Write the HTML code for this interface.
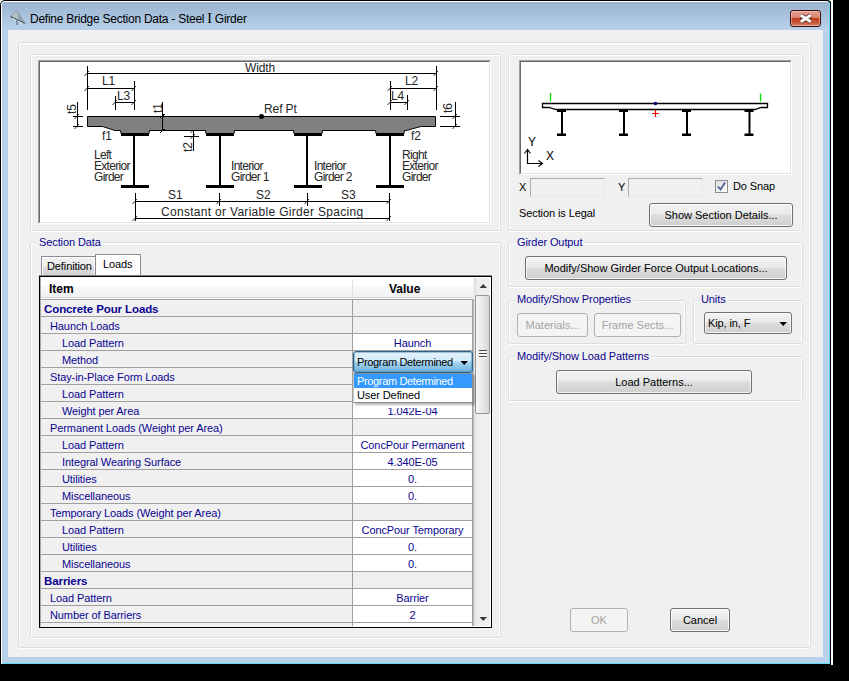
<!DOCTYPE html><html><head><meta charset="utf-8"><style>
*{margin:0;padding:0;box-sizing:border-box}
html,body{width:849px;height:681px;overflow:hidden;background:#000}
body{position:relative;font-family:"Liberation Sans",sans-serif;font-size:11px;color:#000;letter-spacing:-0.1px}
.a{position:absolute}
.t{position:absolute;white-space:nowrap;line-height:13px}
.gb{position:absolute;border:1px solid #D5DFE5;border-radius:2px;box-shadow:0 1px 0 #fff, inset 1px 1px 0 #fff, inset -1px 0 0 #fff}
.gl{position:absolute;white-space:nowrap;line-height:13px;color:#0A0590;background:#F0F0F0;padding:0 2px}
.btn{position:absolute;letter-spacing:0;border:1px solid #707070;border-radius:3px;background:linear-gradient(#F2F2F2 0,#EBEBEB 45%,#DDDDDD 50%,#CFCFCF 100%);box-shadow:inset 0 0 0 1px rgba(255,255,255,.75);text-align:center;white-space:nowrap;color:#000}
.btn.dis{border-color:#ADB2B5;background:#F4F4F4;color:#A3A3A3;box-shadow:none}
.row{position:absolute;left:41px;width:431px;height:16px}
.ic{position:absolute;top:1px;height:16px;line-height:16px;color:#0A0590;white-space:nowrap}
.vc{position:absolute;left:312px;top:0;width:119px;height:16px;line-height:18px;text-align:center;color:#0A0590;white-space:nowrap}
.hl{position:absolute;left:41px;width:431px;height:1px;background:#A0A0A0}
</style></head><body>
<div class="a" style="left:0;top:0;width:5px;height:5px;background:#fff"></div>
<div class="a" style="left:826px;top:0;width:7px;height:5px;background:#E8F0F8"></div>
<div class="a" style="left:0;top:0;width:832px;height:664px;background:#000;border-radius:5px 5px 0 0"></div>
<div class="a" style="left:831px;top:0;width:2px;height:665px;background:#fff"></div>
<div class="a" style="left:1px;top:1px;width:829px;height:663px;background:#fff;border-radius:4px 4px 0 0"></div>
<div class="a" style="left:2px;top:2px;width:828px;height:662px;background:#62D8F2;border-radius:3px 3px 0 0"></div>
<div class="a" style="left:2px;top:2px;width:827px;height:661px;background:linear-gradient(#99B4D1 0px,#B9D1EA 28px,#B9D1EA 100%);border-radius:3px 3px 0 0"></div>
<div class="a" style="left:8px;top:30px;width:815px;height:627px;background:#F0F0F0"></div>
<svg class="a" style="left:9px;top:9px" width="18" height="18" viewBox="0 0 18 18">
<path d="M7.7 1.5 L1.2 7.5 L16.6 14.8 Z" fill="#B8C6CC" stroke="#7E939C" stroke-width="0.9"/>
<path d="M7.7 1.5 L9.5 12 L16.6 14.8 Z" fill="#93A6AE"/>
<path d="M2 7.8 L15.5 14.3" stroke="#3D5661" stroke-width="1.4"/>
<path d="M3 9.2 L14.5 14.8" stroke="#E8EEF0" stroke-width="0.9"/>
<path d="M8 10.5 V16" stroke="#6F868F" stroke-width="1.6"/>
</svg>
<div class="t" style="left:30px;top:12px;font-size:12px;line-height:14px;letter-spacing:-0.25px;word-spacing:0;color:#000">Define Bridge Section Data - Steel <span style="font-family:&quot;Liberation Serif&quot;,serif;font-size:14px;line-height:10px">I</span> Girder</div>
<div class="a" style="left:790px;top:10px;width:31px;height:17px;border:1px solid #3C0E0E;border-radius:3px;background:linear-gradient(#E8A293 0,#D8826E 45%,#C0401E 50%,#C85A3C 80%,#D98C70 100%);box-shadow:inset 0 0 0 1px rgba(255,220,210,.45)"></div>
<svg class="a" style="left:797px;top:11px" width="18" height="15" viewBox="0 0 18 15">
<path d="M3.8 4.3 L13.7 10.7 M13.7 4.3 L3.8 10.7" stroke="#4A2A26" stroke-width="4.4" stroke-linecap="butt"/>
<path d="M3.8 4.3 L13.7 10.7 M13.7 4.3 L3.8 10.7" stroke="#FFFFFF" stroke-width="2.8" stroke-linecap="butt"/>
</svg>
<div class="gb" style="left:18px;top:42px;width:793px;height:606px"></div>
<div class="gb" style="left:30px;top:54px;width:471px;height:177px"></div>
<div class="gb" style="left:508px;top:54px;width:295px;height:177px"></div>
<div class="gb" style="left:30px;top:242px;width:471px;height:396px"></div>
<div class="gb" style="left:508px;top:242px;width:295px;height:45px"></div>
<div class="gb" style="left:508px;top:300px;width:178px;height:44px"></div>
<div class="gb" style="left:693px;top:300px;width:110px;height:44px"></div>
<div class="gb" style="left:508px;top:356px;width:295px;height:45px"></div>
<div class="gl" style="left:37px;top:236px">Section Data</div>
<div class="gl" style="left:515px;top:236px">Girder Output</div>
<div class="gl" style="left:515px;top:293px">Modify/Show Properties</div>
<div class="gl" style="left:699px;top:293px">Units</div>
<div class="gl" style="left:515px;top:350px">Modify/Show Load Patterns</div>
<div class="a" style="left:38px;top:60px;width:453px;height:164px;background:#fff;border-style:solid;border-width:1px;border-color:#A0A0A0 #FFFFFF #FFFFFF #A0A0A0"></div>
<div class="a" style="left:39px;top:61px;width:451px;height:162px;border-style:solid;border-width:1px;border-color:#696969 #E3E3E3 #E3E3E3 #696969"></div>
<div class="a" style="left:519px;top:60px;width:273px;height:115px;background:#fff;border-style:solid;border-width:1px;border-color:#A0A0A0 #FFFFFF #FFFFFF #A0A0A0"></div>
<div class="a" style="left:520px;top:61px;width:271px;height:113px;border-style:solid;border-width:1px;border-color:#696969 #E3E3E3 #E3E3E3 #696969"></div>
<svg class="a" style="left:40px;top:62px" width="449" height="160" viewBox="40 62 449 160" shape-rendering="crispEdges"><g stroke="#000" stroke-width="1" fill="none"><path d="M87 73.5 H436 M87.5 66 V110 M436.5 66 V110"/><path d="M87 88.5 H134 M134.5 81 V110"/><path d="M115 102.5 H134 M115.5 96 V110"/><path d="M390 88.5 H436 M390.5 81 V110"/><path d="M390 102.5 H407 M407.5 95 V110"/><path d="M77.5 102 V127 M73 116.5 H83 M73 126.5 H83"/><path d="M455.5 102 V127 M440 116.5 H460 M440 126.5 H460"/><path d="M193.5 127 V151 M184 136.5 H199"/><path d="M135 201.5 H389 M135 218.5 H389 M135.5 193 V221 M389.5 193 V221 M219.5 193 V206 M307.5 193 V206"/></g><path d="M84.5 76 L89 71 M433.5 76 L438 71 M84.5 91 L89 86 M131.5 91 L136 86 M112.5 105 L117 100 M131.5 105 L136 100 M387.5 91 L392 86 M433.5 91 L438 86 M387.5 105 L392 100 M404.5 105 L409 100 M132.5 204 L137 199 M386.5 204 L391 199 M216.5 204 L221 199 M304.5 204 L309 199 M132.5 221 L137 216 M386.5 221 L391 216 M74.5 119 L79 114 M74.5 129 L79 124 M452.5 119 L457 114 M452.5 129 L457 124 M190.5 133 L195 128 M190.5 139 L195 134" stroke="#000" stroke-width="0.8" fill="none" shape-rendering="auto"/><polygon points="87.5,116.5 435.5,116.5 435.5,126.5 421,126.5 406,130.5 404.5,130.5 404,133.5 376,133.5 375.5,130.5 322.5,130.5 322,133.5 294,133.5 293.5,130.5 234.5,130.5 234,133.5 206,133.5 205.5,130.5 149.5,130.5 149,133.5 121,133.5 120.5,130.5 115,130.5 102.5,126.5 87.5,126.5" fill="#808080" stroke="#000" stroke-width="1" shape-rendering="auto"/><rect x="121" y="134" width="28" height="2" fill="#000"/><rect x="133" y="136" width="2" height="49" fill="#000"/><rect x="121" y="185" width="28" height="3" fill="#000"/><rect x="206" y="134" width="28" height="2" fill="#000"/><rect x="219" y="136" width="2" height="49" fill="#000"/><rect x="206" y="185" width="28" height="3" fill="#000"/><rect x="294" y="134" width="28" height="2" fill="#000"/><rect x="306" y="136" width="2" height="49" fill="#000"/><rect x="294" y="185" width="28" height="3" fill="#000"/><rect x="376" y="134" width="28" height="2" fill="#000"/><rect x="389" y="136" width="2" height="49" fill="#000"/><rect x="376" y="185" width="28" height="3" fill="#000"/><path d="M162.5 102 V131 M160 118 L164.5 114 M160 133 L164.5 129" stroke="#000" stroke-width="1" fill="none"/><circle cx="261.5" cy="116.5" r="2.5" fill="#000" shape-rendering="auto"/></svg>
<div class="t" style="left:245px;top:62px;font-size:12px;line-height:12px;color:#262626;">Width</div>
<div class="t" style="left:102px;top:75px;font-size:12px;line-height:12px;color:#262626;">L1</div>
<div class="t" style="left:117px;top:90px;font-size:12px;line-height:12px;color:#262626;">L3</div>
<div class="t" style="left:405px;top:75px;font-size:12px;line-height:12px;color:#262626;">L2</div>
<div class="t" style="left:391px;top:90px;font-size:12px;line-height:12px;color:#262626;">L4</div>
<div class="t" style="left:264px;top:103px;font-size:12px;line-height:12px;color:#262626;">Ref Pt</div>
<div class="t" style="left:102px;top:130px;font-size:12px;line-height:12px;color:#262626;">f1</div>
<div class="t" style="left:411px;top:130px;font-size:12px;line-height:12px;color:#262626;">f2</div>
<div class="t" style="left:168px;top:189px;font-size:12px;line-height:12px;color:#262626;">S1</div>
<div class="t" style="left:256px;top:189px;font-size:12px;line-height:12px;color:#262626;">S2</div>
<div class="t" style="left:341px;top:189px;font-size:12px;line-height:12px;color:#262626;">S3</div>
<div class="t" style="left:161px;top:206px;font-size:12px;line-height:12px;color:#262626;letter-spacing:0.3px">Constant or Variable Girder Spacing</div>
<div class="t" style="left:64px;top:103px;width:16px;text-align:center;font-size:12px;line-height:12px;color:#262626;transform:rotate(-90deg)">t5</div>
<div class="t" style="left:440px;top:102px;width:16px;text-align:center;font-size:12px;line-height:12px;color:#262626;transform:rotate(-90deg)">t6</div>
<div class="t" style="left:150px;top:102px;width:16px;text-align:center;font-size:12px;line-height:12px;color:#262626;transform:rotate(-90deg)">t1</div>
<div class="t" style="left:180px;top:141px;width:16px;text-align:center;font-size:12px;line-height:12px;color:#262626;transform:rotate(-90deg)">t2</div>
<div class="t" style="left:94px;top:150px;font-size:12px;line-height:11px;letter-spacing:-0.7px;color:#262626">Left<br>Exterior<br>Girder</div>
<div class="t" style="left:231px;top:161px;font-size:12px;line-height:11px;letter-spacing:-0.7px;color:#262626">Interior<br>Girder 1</div>
<div class="t" style="left:314px;top:161px;font-size:12px;line-height:11px;letter-spacing:-0.7px;color:#262626">Interior<br>Girder 2</div>
<div class="t" style="left:402px;top:150px;font-size:12px;line-height:11px;letter-spacing:-0.7px;color:#262626">Right<br>Exterior<br>Girder</div>
<svg class="a" style="left:521px;top:62px" width="269" height="111" viewBox="521 62 269 111"><path d="M542.5 103.5 H767.5 V107.5 H761 L755 109.5 H556 L549 107.5 H542.5 Z" fill="#fff" stroke="#000" stroke-width="1.3"/><rect x="557" y="109" width="9" height="3" fill="#000"/><rect x="561" y="110" width="2" height="25" fill="#000"/><rect x="557" y="133.5" width="9" height="2.5" fill="#000"/><rect x="619" y="109" width="9" height="3" fill="#000"/><rect x="623" y="110" width="2" height="25" fill="#000"/><rect x="619" y="133.5" width="9" height="2.5" fill="#000"/><rect x="682" y="109" width="9" height="3" fill="#000"/><rect x="686" y="110" width="2" height="25" fill="#000"/><rect x="682" y="133.5" width="9" height="2.5" fill="#000"/><rect x="744.5" y="109" width="9" height="3" fill="#000"/><rect x="748.5" y="110" width="2" height="25" fill="#000"/><rect x="744.5" y="133.5" width="9" height="2.5" fill="#000"/><path d="M550.5 93 V101.5 M760.5 93.5 V101.5" stroke="#00E000" stroke-width="1.3"/><circle cx="655.5" cy="103.5" r="1.8" fill="#000080"/><path d="M652 113.5 H659 M655.5 110 V117" stroke="#FF0000" stroke-width="1.2"/><path d="M527.5 150 V163.5 H542" fill="none" stroke="#000" stroke-width="1.2"/><path d="M524.5 153.5 L527.5 149.5 L530.5 153.5 M538.5 160.5 L542.5 163.5 L538.5 166.5" fill="none" stroke="#000" stroke-width="1.1"/></svg>
<div class="t" style="left:528px;top:136px;font-size:12px;line-height:12px;color:#000">Y</div>
<div class="t" style="left:546px;top:150px;font-size:12px;line-height:12px;color:#000">X</div>
<div class="t" style="left:519px;top:181px">X</div>
<div class="a" style="left:530px;top:178px;width:75px;height:19px;border:1px solid;border-color:#ABADB3 #E3E9EF #E3E9EF #ABADB3;background:#F0F0F0"></div>
<div class="t" style="left:618px;top:181px">Y</div>
<div class="a" style="left:628px;top:178px;width:75px;height:19px;border:1px solid;border-color:#ABADB3 #E3E9EF #E3E9EF #ABADB3;background:#F0F0F0"></div>
<div class="a" style="left:715px;top:180px;width:13px;height:13px;border:1px solid #8E8F8F;background:linear-gradient(135deg,#DCDCDC,#FFFFFF)"></div>
<svg class="a" style="left:715px;top:180px" width="13" height="13" viewBox="0 0 13 13"><path d="M3 6.5 L5.5 9.5 L10 2.5" fill="none" stroke="#4A5F97" stroke-width="1.8"/></svg>
<div class="t" style="left:733px;top:180px">Do Snap</div>
<div class="t" style="left:519px;top:207px">Section is Legal</div>
<div class="btn" style="left:649px;top:203px;width:144px;height:24px;line-height:22px;">Show Section Details...</div>
<div class="btn" style="left:525px;top:256px;width:262px;height:24px;line-height:22px;">Modify/Show Girder Force Output Locations...</div>
<div class="btn dis" style="left:517px;top:313px;width:71px;height:24px;line-height:22px;">Materials...</div>
<div class="btn dis" style="left:594px;top:313px;width:87px;height:24px;line-height:22px;">Frame Sects...</div>
<div class="btn" style="left:556px;top:370px;width:196px;height:24px;line-height:22px;">Load Patterns...</div>
<div class="btn dis" style="left:570px;top:608px;width:58px;height:24px;line-height:22px;">OK</div>
<div class="btn" style="left:670px;top:608px;width:60px;height:24px;line-height:22px;">Cancel</div>
<div class="btn" style="left:704px;top:312px;width:88px;height:22px;text-align:left;padding-left:3px;line-height:20px;letter-spacing:-0.1px">Kip, in, F</div>
<svg class="a" style="left:779px;top:321px" width="9" height="6" viewBox="0 0 9 6"><path d="M0.5 1 H8 L4.25 5 Z" fill="#000"/></svg>
<div class="a" style="left:41px;top:256px;width:55px;height:21px;border:1px solid #898C95;border-bottom:none;border-radius:0;background:linear-gradient(#F2F2F2,#EBEBEB 50%,#DDDDDD 51%,#CFCFCF);box-shadow:inset 1px 1px 0 #fff,inset -1px 0 0 rgba(255,255,255,.6)"></div>
<div class="t" style="left:47px;top:260px">Definition</div>
<div class="a" style="left:95px;top:254px;width:46px;height:23px;border:1px solid #898C95;border-bottom:none;border-radius:0;background:#fff"></div>
<div class="t" style="left:103px;top:258px">Loads</div>
<div class="a" style="left:39px;top:275px;width:453px;height:1px;background:#80838C"></div>
<div class="a" style="left:39px;top:276px;width:453px;height:352px;border:1px solid #000;background:#F0F0F0"></div>
<div class="a" style="left:40px;top:277px;width:451px;height:350px;border:1px solid #fff;border-left-color:#A8A8A8"></div>
<div class="a" style="left:41px;top:278px;width:432px;height:20px;background:linear-gradient(#FFFFFF 0,#FFFFFF 40%,#F7F8F9 41%,#F1F2F4 100%);border-bottom:1px solid #D5D5D5"></div>
<div class="a" style="left:352px;top:279px;width:1px;height:18px;background:#E2E3E5"></div>
<div class="t" style="left:49px;top:283px;font-weight:bold;font-size:12px;letter-spacing:0">Item</div>
<div class="t" style="left:389px;top:283px;font-weight:bold;font-size:12px;letter-spacing:0">Value</div>
<div class="a" style="left:41px;top:298px;width:432px;height:1px;background:#fff"></div>
<div class="hl" style="top:299px"></div>
<div class="row" style="top:300px">
<div class="ic" style="left:3px;font-weight:bold;font-size:11.5px;top:1px;">Concrete Pour Loads</div>
</div>
<div class="hl" style="top:316px"></div>
<div class="row" style="top:317px">
<div class="ic" style="left:9px;">Haunch Loads</div>
</div>
<div class="hl" style="top:333px"></div>
<div class="row" style="top:334px">
<div class="ic" style="left:21px;">Load Pattern</div>
<div class="vc" style="background:#fff">Haunch</div>
</div>
<div class="hl" style="top:350px"></div>
<div class="row" style="top:351px">
<div class="ic" style="left:21px;">Method</div>
</div>
<div class="hl" style="top:367px"></div>
<div class="row" style="top:368px">
<div class="ic" style="left:9px;">Stay-in-Place Form Loads</div>
</div>
<div class="hl" style="top:384px"></div>
<div class="row" style="top:385px">
<div class="ic" style="left:21px;">Load Pattern</div>
<div class="vc" style="background:#fff"></div>
</div>
<div class="hl" style="top:401px"></div>
<div class="row" style="top:402px">
<div class="ic" style="left:21px;">Weight per Area</div>
<div class="vc" style="background:#fff">1.042E-04</div>
</div>
<div class="hl" style="top:418px"></div>
<div class="row" style="top:419px">
<div class="ic" style="left:9px;">Permanent Loads (Weight per Area)</div>
</div>
<div class="hl" style="top:435px"></div>
<div class="row" style="top:436px">
<div class="ic" style="left:21px;">Load Pattern</div>
<div class="vc" style="background:#fff">ConcPour Permanent</div>
</div>
<div class="hl" style="top:452px"></div>
<div class="row" style="top:453px">
<div class="ic" style="left:21px;">Integral Wearing Surface</div>
<div class="vc" style="background:#fff">4.340E-05</div>
</div>
<div class="hl" style="top:469px"></div>
<div class="row" style="top:470px">
<div class="ic" style="left:21px;">Utilities</div>
<div class="vc" style="background:#fff">0.</div>
</div>
<div class="hl" style="top:486px"></div>
<div class="row" style="top:487px">
<div class="ic" style="left:21px;">Miscellaneous</div>
<div class="vc" style="background:#fff">0.</div>
</div>
<div class="hl" style="top:503px"></div>
<div class="row" style="top:504px">
<div class="ic" style="left:9px;">Temporary Loads (Weight per Area)</div>
</div>
<div class="hl" style="top:520px"></div>
<div class="row" style="top:521px">
<div class="ic" style="left:21px;">Load Pattern</div>
<div class="vc" style="background:#fff">ConcPour Temporary</div>
</div>
<div class="hl" style="top:537px"></div>
<div class="row" style="top:538px">
<div class="ic" style="left:21px;">Utilities</div>
<div class="vc" style="background:#fff">0.</div>
</div>
<div class="hl" style="top:554px"></div>
<div class="row" style="top:555px">
<div class="ic" style="left:21px;">Miscellaneous</div>
<div class="vc" style="background:#fff">0.</div>
</div>
<div class="hl" style="top:571px"></div>
<div class="row" style="top:572px">
<div class="ic" style="left:3px;font-weight:bold;font-size:11.5px;top:1px;">Barriers</div>
</div>
<div class="hl" style="top:588px"></div>
<div class="row" style="top:589px">
<div class="ic" style="left:9px;">Load Pattern</div>
<div class="vc" style="background:#fff">Barrier</div>
</div>
<div class="hl" style="top:605px"></div>
<div class="row" style="top:606px">
<div class="ic" style="left:9px;">Number of Barriers</div>
<div class="vc" style="background:#fff">2</div>
</div>
<div class="hl" style="top:622px"></div>
<div class="a" style="left:41px;top:623px;width:431px;height:4px;background:#F0F0F0"></div>
<div class="a" style="left:353px;top:623px;width:119px;height:4px;background:#fff"></div>
<div class="a" style="left:352px;top:299px;width:1px;height:327px;background:#A0A0A0"></div>
<div class="a" style="left:472px;top:299px;width:1px;height:327px;background:#A0A0A0"></div>
<div class="a" style="left:473px;top:299px;width:1px;height:327px;background:#BDBDBD"></div>
<div class="a" style="left:474px;top:278px;width:16px;height:348px;background:linear-gradient(90deg,#E0E0E0,#EFEFEF 25%,#F0F0F0 75%,#F0F0F0)"></div>
<svg class="a" style="left:479px;top:283px" width="9" height="6" viewBox="0 0 9 6"><path d="M0.5 5 H8 L4.25 1 Z" fill="#3C3C3C"/></svg>
<svg class="a" style="left:479px;top:616px" width="9" height="6" viewBox="0 0 9 6"><path d="M0.5 1 H8 L4.25 5 Z" fill="#3C3C3C"/></svg>
<div class="a" style="left:475px;top:295px;width:15px;height:119px;border:1px solid #979797;border-radius:2px;background:linear-gradient(90deg,#F6F6F6,#E9E9E9 50%,#D6D6D6)"></div>
<div class="a" style="left:479px;top:350px;width:8px;height:8px;background:repeating-linear-gradient(#4A4A4A 0,#4A4A4A 1px,#9A9A9A 1px,#9A9A9A 1.5px,#F4F4F4 1.5px,#F4F4F4 3px)"></div>
<div class="a" style="left:353px;top:351px;width:120px;height:22px;border:1px solid #2C628B;border-radius:3px;background:linear-gradient(#E4F3FC 0,#D2EBF9 45%,#A9D6F1 50%,#6DB0DC 100%);box-shadow:inset 0 0 0 1px rgba(70,130,180,.45)"></div>
<div class="t" style="left:357px;top:356px;letter-spacing:-0.35px">Program Determined</div>
<svg class="a" style="left:460px;top:360px" width="9" height="6" viewBox="0 0 9 6"><path d="M0.5 1 H8 L4.25 5 Z" fill="#000"/></svg>
<div class="a" style="left:354px;top:403px;width:118px;height:5px;background:#fff"></div>
<div class="a" style="left:353px;top:373px;width:120px;height:30px;border:1px solid #8E8F8F;border-left-color:#C8C8C8;background:#fff;box-shadow:2px 2px 2px rgba(0,0,0,.28)"></div>
<div class="a" style="left:354px;top:374px;width:118px;height:14px;background:#3399FF"></div>
<div class="t" style="left:357px;top:375px;color:#fff;letter-spacing:-0.35px">Program Determined</div>
<div class="t" style="left:357px;top:389px">User Defined</div>
</body></html>
